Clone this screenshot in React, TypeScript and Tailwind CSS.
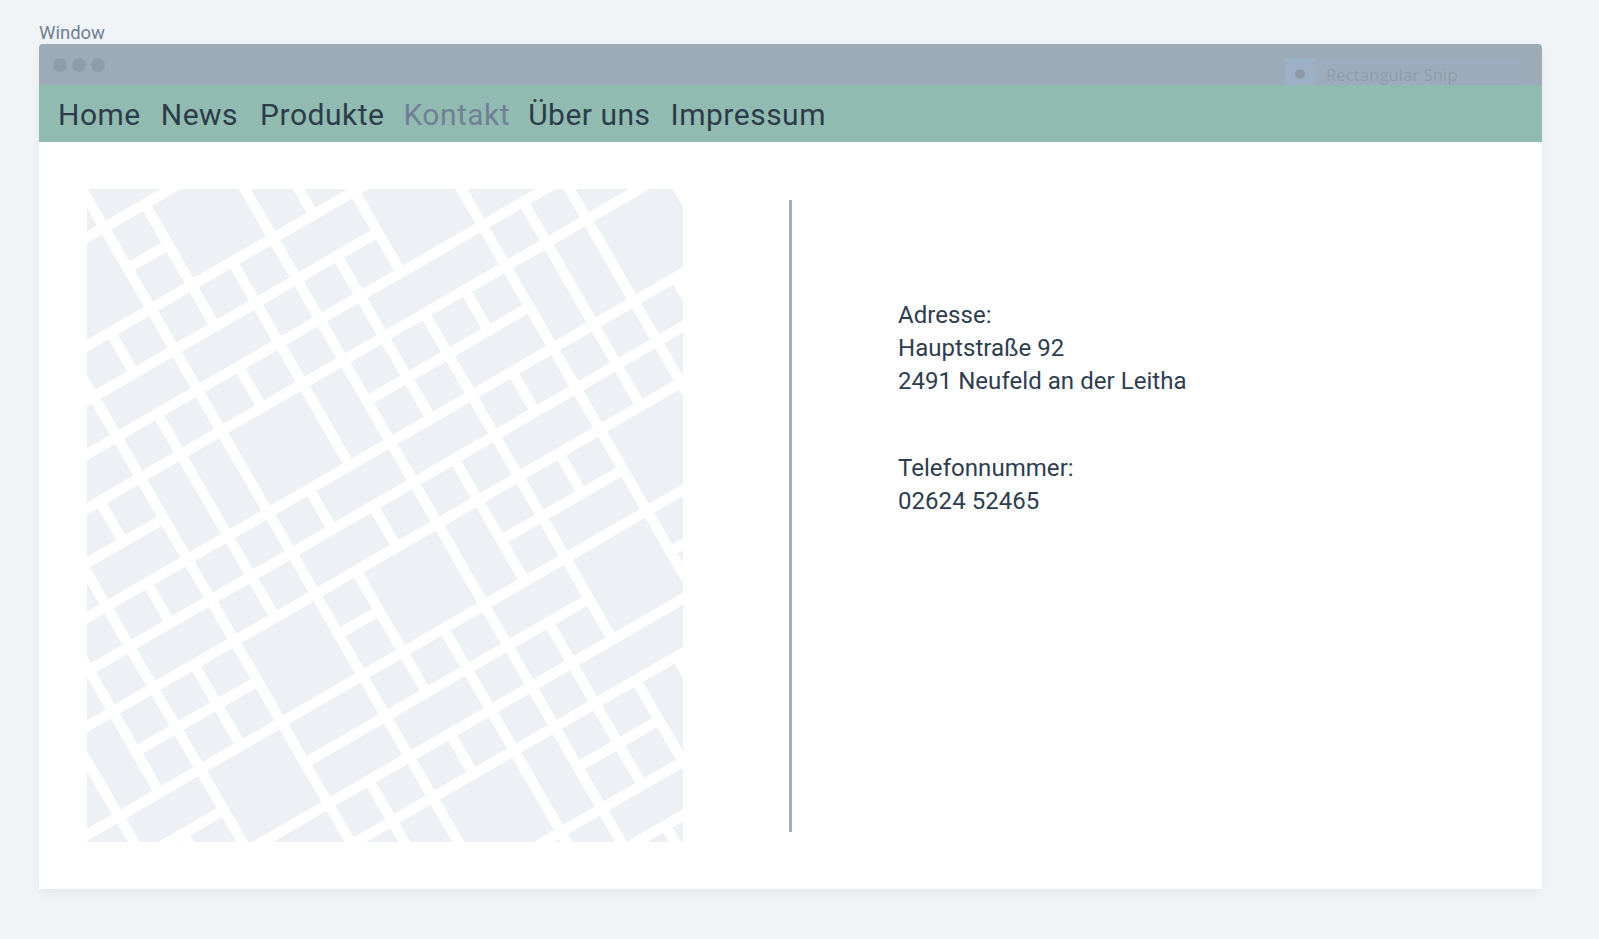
const A_FULL = [172, 497, 822, 985, 1312, 1473, 1638, 1963, 2289, 2451, 2777, 2938];
const B_FULL = [-986, -660, -335, -11, 478, 1129, 1453, 1781];

// [a, fromB, toB]: roads rising to the right
const A_PARTS = [
    [335, -11, 153], [661, -3000, 803], [1148, -3000, -335], [1148, 478, 1129],
    [1798, -823, -335], [1798, -11, 152], [1798, 641, 1129],
    [2126, -3000, -660], [2126, -335, 803], [2126, 1129, 3000], [2611, 478, 805],
];

// [b, fromA, toA]: cross streets falling to the right
const B_PARTS = [
    [-823, -500, 1963], [-823, 2126, 4000], [-498, 985, 1148], [-497, 1312, 1473], [-497, 1638, 1963],
    [-173, 497, 661], [-173, 822, 1638], [-173, 2289, 4000],
    [152, 172, 661], [152, 822, 985], [152, 1312, 1473], [152, 1638, 2126], [152, 2289, 2451],
    [315, 497, 1312], [315, 1473, 1638], [315, 1963, 4000],
    [640, -500, 497], [640, 661, 1312], [640, 1473, 1963], [640, 2126, 2777], [640, 2938, 4000],
    [803, 497, 822], [803, 985, 2289], [803, 2451, 2777],
    [965, 985, 1148], [965, 1312, 1473], [965, 1638, 1798], [965, 2451, 4000],
    [1292, 822, 1638], [1617, 1312, 4000],
];

const K = 0.5774;

function cross(a: number, b: number) {
    const y = 0.75 * (a - K * (b - 20));
    return `${(b + K * y).toFixed(1)} ${y.toFixed(1)}`;
}

function roadsPath() {
    const parts: string[] = [];
    A_FULL.forEach((a) => parts.push(`M${cross(a, -3000)}L${cross(a, 3000)}`));
    B_FULL.forEach((b) => parts.push(`M${cross(-500, b)}L${cross(4000, b)}`));
    A_PARTS.forEach(([a, from, to]) => parts.push(`M${cross(a, from)}L${cross(a, to)}`));
    B_PARTS.forEach(([b, from, to]) => parts.push(`M${cross(from, b)}L${cross(to, b)}`));
    return parts.join('');
}

function StreetMap() {
    return (
        <svg width="596" height="653" viewBox="20 27 1790 1958" preserveAspectRatio="none" className="block shrink-0 bg-[#edf0f5]">
            <path d={roadsPath()} fill="none" stroke="#ffffff" strokeWidth="31" />
        </svg>
    );
}

export default function App() {
    return (
        <div className="min-h-[939px] bg-[#f0f4f7] px-[39px] pt-[22px] font-['Roboto',sans-serif]">
            <div className="text-[18.5px] leading-[22px] text-[#718096]">Window</div>

            <div className="relative w-[1503px] rounded-t-[4px] bg-white shadow-[0_4px_12px_rgba(0,0,0,0.05)]">
                {/* Title bar */}
                <div className="flex h-[41px] items-center gap-[5px] rounded-t-[4px] bg-[#9cabb8] pl-[14px]">
                    <span className="h-[14px] w-[14px] rounded-full bg-[#8c9dae]" />
                    <span className="h-[14px] w-[14px] rounded-full bg-[#8c9dae]" />
                    <span className="h-[14px] w-[14px] rounded-full bg-[#8c9dae]" />
                </div>

                {/* Snip ghost */}
                <div className="absolute left-[1246px] top-[14px] flex h-[27px] w-[237px] items-center bg-[#9dacbc] pt-[4px]">
                    <div className="-mt-[4px] flex h-[27px] w-[30px] items-center justify-center bg-[#9cb0c6] pt-[4px]">
                        <span className="h-[10px] w-[10px] rounded-full bg-[#8f9aa6]" />
                    </div>
                    <span className="ml-[11px] pt-[3px] font-['Open_Sans',sans-serif] text-[16.8px] text-[#8d9cab]">Rectangular Snip</span>
                </div>

                {/* Nav */}
                <nav className="flex h-[57px] items-center bg-[#91bbb1] pl-[19px] pt-[1px] text-[30px] tracking-[0.5px] text-[#2d3c4a]">
                    <a className="mr-[20px]">Home</a>
                    <a className="mr-[22px]">News</a>
                    <a className="mr-[19px]">Produkte</a>
                    <a className="mr-[18px] text-[#718096]">Kontakt</a>
                    <a className="mr-[20px]">Über uns</a>
                    <a>Impressum</a>
                </nav>

                {/* Body */}
                <div className="flex h-[747px] items-start pl-[48px] pt-[47px]">
                    <StreetMap />
                    <div className="ml-[106px] mt-[11px] h-[632px] w-[3px] bg-[#a0aec0]" />
                    <div className="ml-[106px] mt-[110px] text-[24px] leading-[33px] tracking-[0.05px] text-[#2d3d4f]">
                        <p>Adresse:</p>
                        <p>Hauptstraße 92</p>
                        <p>2491 Neufeld an der Leitha</p>
                        <p className="mt-[54px]">Telefonnummer:</p>
                        <p>02624 52465</p>
                    </div>
                </div>
            </div>
        </div>
    );
}
